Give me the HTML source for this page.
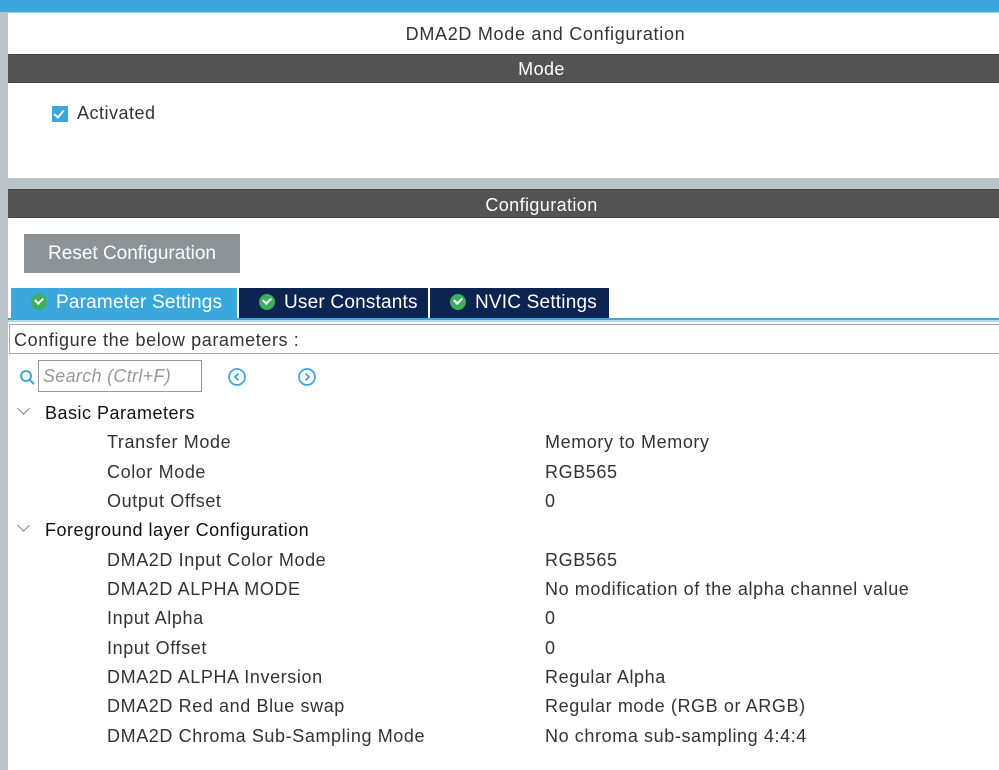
<!DOCTYPE html>
<html><head><meta charset="utf-8"><style>
*{margin:0;padding:0;box-sizing:border-box}
body{width:999px;height:770px;overflow:hidden;background:#fff;font-family:"Liberation Sans",Arial,sans-serif;position:relative}
.a{position:absolute;white-space:nowrap}
.bar{position:absolute;left:8px;right:0;background:#525352;color:#fff;font-size:18px;text-align:center;border-top:1px solid #444;border-bottom:1px solid #444;padding-left:76px;letter-spacing:0.4px}
.t{position:absolute;top:288px;height:30px;background:#0b2550;color:#fff;font-size:19px;line-height:30px;padding-left:20px;letter-spacing:0.2px}
.t i{display:inline-block;width:16px;height:16px;border-radius:50%;background:#3dae5a;vertical-align:-2px;margin-right:9px;position:relative}
.t i:after{content:"";position:absolute;left:4px;top:3px;width:6px;height:4px;border-left:2px solid #fff;border-bottom:2px solid #fff;transform:rotate(-45deg)}
.r{position:absolute;font-size:18px;color:#333;line-height:20px;letter-spacing:0.6px;white-space:nowrap}
.h{position:absolute;font-size:18px;color:#111;line-height:20px;letter-spacing:0.5px;white-space:nowrap}
.chev{position:absolute;left:19px;width:9px;height:9px;border-right:1.5px solid #888;border-bottom:1.5px solid #888;transform:rotate(45deg)}
</style></head><body>
<div class="a" style="left:0;top:0;width:999px;height:12px;background:#3aa8dc"></div>
<div class="a" style="left:0;top:12px;width:8px;height:758px;background:#b9c3c8"></div>
<div class="a" style="left:8px;top:12px;right:0;height:1px;background:#9fd0ea"></div>
<div class="a" style="left:0;top:24px;width:1091px;text-align:center;font-size:18px;color:#333;letter-spacing:0.7px">DMA2D Mode and Configuration</div>
<div class="bar" style="top:54px;height:29px;line-height:28px">Mode</div>
<div class="a" style="left:52px;top:106px;width:16px;height:16px;background:#3aa8dc"></div>
<div class="a" style="left:56px;top:108px;width:6px;height:10px;border-right:2px solid #fff;border-bottom:2px solid #fff;transform:rotate(40deg)"></div>
<div class="a" style="left:77px;top:103px;font-size:18px;color:#333;letter-spacing:0.5px">Activated</div>
<div class="a" style="left:8px;top:178px;right:0;height:11px;background:#b9c3c8"></div>
<div class="bar" style="top:189px;height:29px;line-height:30px">Configuration</div>
<div class="a" style="left:24px;top:234px;width:216px;height:39px;background:#8d9296;color:#fff;font-size:19px;line-height:39px;text-align:center">Reset Configuration</div>
<div class="t" style="left:11px;width:226px;background:#3aa8dc"><i></i>Parameter Settings</div>
<div class="t" style="left:239px;width:189px"><i></i>User Constants</div>
<div class="t" style="left:430px;width:179px"><i></i>NVIC Settings</div>
<div class="a" style="left:8px;top:318px;right:0;height:2px;background:#3aa8dc"></div>
<div class="a" style="left:8px;top:320px;right:0;height:2px;background:#b5d9ee"></div>
<div class="a" style="left:9px;top:324px;width:990px;height:30px;border:1px solid #aaa;border-right:none;font-size:18px;color:#333;line-height:30px;padding-left:4px;letter-spacing:0.6px">Configure the below parameters :</div>
<svg class="a" style="left:19px;top:369px" width="18" height="18"><circle cx="7" cy="7" r="5" fill="none" stroke="#3aa8dc" stroke-width="2"/><line x1="11" y1="11" x2="15" y2="15" stroke="#3aa8dc" stroke-width="2"/></svg>
<div class="a" style="left:38px;top:360px;width:164px;height:32px;border:1px solid #999;font-size:18px;font-style:italic;color:#999;line-height:30px;padding-left:4px;letter-spacing:0.3px">Search (Ctrl+F)</div>
<svg class="a" style="left:227px;top:367px" width="20" height="20"><circle cx="10" cy="10" r="8" fill="none" stroke="#3aa8dc" stroke-width="1.8"/><path d="M11.5 6.5L8 10l3.5 3.5" fill="none" stroke="#3aa8dc" stroke-width="1.8"/></svg>
<svg class="a" style="left:297px;top:367px" width="20" height="20"><circle cx="10" cy="10" r="8" fill="none" stroke="#3aa8dc" stroke-width="1.8"/><path d="M8.5 6.5L12 10l-3.5 3.5" fill="none" stroke="#3aa8dc" stroke-width="1.8"/></svg>
<div class="chev" style="top:404px"></div><div class="h" style="left:45px;top:403px">Basic Parameters</div>
<div class="r" style="left:107px;top:432px">Transfer Mode</div><div class="r" style="left:545px;top:432px">Memory to Memory</div>
<div class="r" style="left:107px;top:462px">Color Mode</div><div class="r" style="left:545px;top:462px">RGB565</div>
<div class="r" style="left:107px;top:491px">Output Offset</div><div class="r" style="left:545px;top:491px">0</div>
<div class="chev" style="top:521px"></div><div class="h" style="left:45px;top:520px">Foreground layer Configuration</div>
<div class="r" style="left:107px;top:550px">DMA2D Input Color Mode</div><div class="r" style="left:545px;top:550px">RGB565</div>
<div class="r" style="left:107px;top:579px">DMA2D ALPHA MODE</div><div class="r" style="left:545px;top:579px">No modification of the alpha channel value</div>
<div class="r" style="left:107px;top:608px">Input Alpha</div><div class="r" style="left:545px;top:608px">0</div>
<div class="r" style="left:107px;top:638px">Input Offset</div><div class="r" style="left:545px;top:638px">0</div>
<div class="r" style="left:107px;top:667px">DMA2D ALPHA Inversion</div><div class="r" style="left:545px;top:667px">Regular Alpha</div>
<div class="r" style="left:107px;top:696px">DMA2D Red and Blue swap</div><div class="r" style="left:545px;top:696px">Regular mode (RGB or ARGB)</div>
<div class="r" style="left:107px;top:726px">DMA2D Chroma Sub-Sampling Mode</div><div class="r" style="left:545px;top:726px">No chroma sub-sampling 4:4:4</div>
</body></html>
